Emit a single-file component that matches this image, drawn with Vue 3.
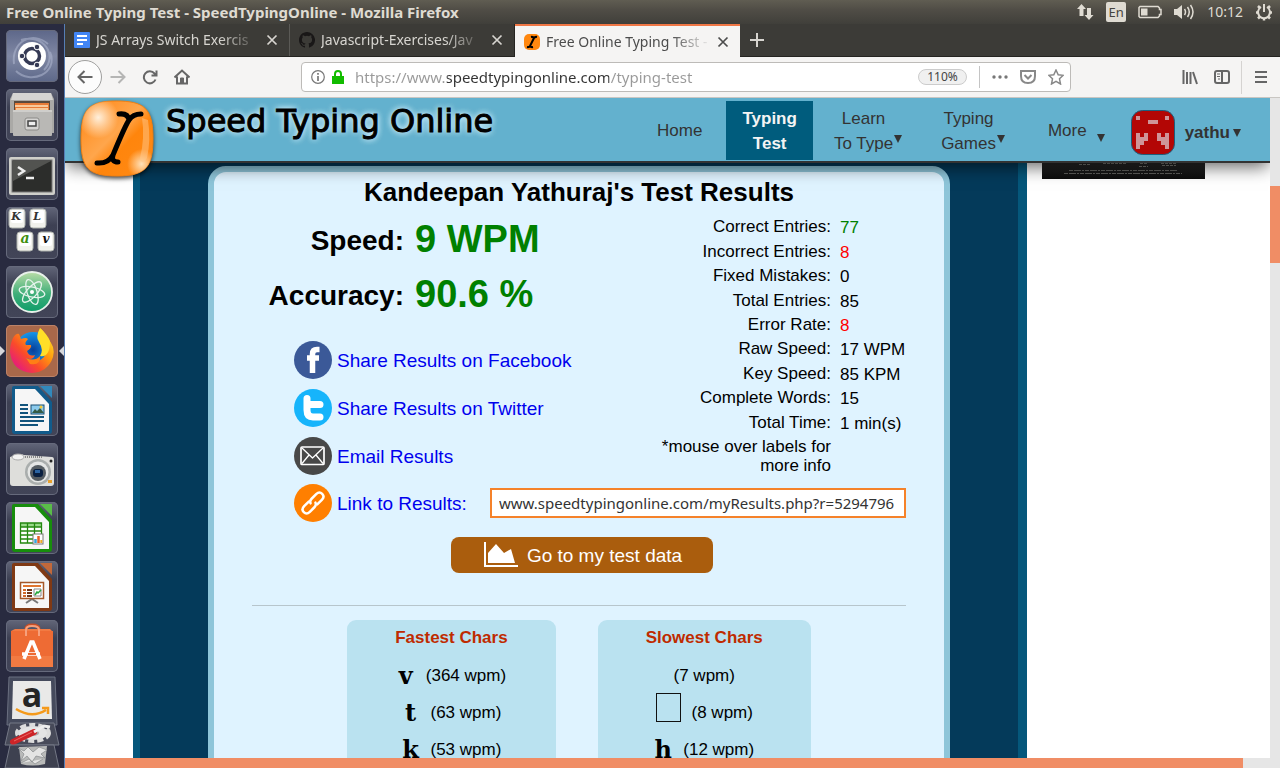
<script setup>
import { ref } from 'vue'

const tabs = [
  { id: 'docs', title: 'JS Arrays Switch Exercis', icon: 'docs' },
  { id: 'github', title: 'Javascript-Exercises/Jav', icon: 'github' },
  { id: 'typing', title: 'Free Online Typing Test -', icon: 'typing', active: true },
]

const stats = [
  { label: 'Correct Entries:', value: '77', tone: 'good' },
  { label: 'Incorrect Entries:', value: '8', tone: 'bad' },
  { label: 'Fixed Mistakes:', value: '0' },
  { label: 'Total Entries:', value: '85' },
  { label: 'Error Rate:', value: '8', tone: 'bad' },
  { label: 'Raw Speed:', value: '17 WPM' },
  { label: 'Key Speed:', value: '85 KPM' },
  { label: 'Complete Words:', value: '15' },
  { label: 'Total Time:', value: '1 min(s)' },
]

const charBoxes = [
  {
    title: 'Fastest Chars',
    rows: [
      { char: 'v', speed: '(364 wpm)' },
      { char: 't', speed: '(63 wpm)' },
      { char: 'k', speed: '(53 wpm)' },
    ],
  },
  {
    title: 'Slowest Chars',
    rows: [
      { char: '', speed: '(7 wpm)' },
      { char: '', speed: '(8 wpm)', empty: true },
      { char: 'h', speed: '(12 wpm)' },
    ],
  },
]

const address = ref('https://www.speedtypingonline.com/typing-test')
const resultLink = ref('www.speedtypingonline.com/myResults.php?r=5294796')
</script>

<template>
  <div class="desktop">
    <header class="panel">
      <span class="panel-title">Free Online Typing Test - SpeedTypingOnline - Mozilla Firefox</span>
      <div class="indicators">
        <svg width="18" height="18" viewBox="0 0 18 18" fill="#dfdbd2">
          <path d="M5.500 1L10 6H7.500V13H3.500V6H1Z" />
          <path d="M13 17L17.500 12H15V5H11V12H8.500Z" />
        </svg>
        <span class="lang">En</span>
        <svg width="24" height="14" viewBox="0 0 24 14" fill="none" stroke="#dfdbd2" stroke-width="1.500">
          <path d="M2 1.500H20L21.500 3V4.500H23V9.500H21.500V11L20 12.500H2L1 11.500V2.500Z" />
          <rect x="3" y="3.500" width="6.500" height="7" fill="#dfdbd2" stroke="none" />
        </svg>
        <svg width="21" height="18" viewBox="0 0 21 18" fill="none" stroke="#dfdbd2" stroke-width="1.500">
          <path d="M0 6H3L8 2V16L3 12H0Z" fill="#dfdbd2" stroke="none" />
          <path d="M10.500 6Q12.500 9 10.500 12M13.500 4Q17 9 13.500 14M16.500 2Q21.500 9 16.500 16" />
        </svg>
        <span class="clock">10:12</span>
        <svg width="18" height="18" viewBox="0 0 18 18" fill="none" stroke="#dfdbd2">
          <path d="M6 4A6 6 0 1 0 12 4" stroke-width="2" />
          <path d="M9 1V9" stroke-width="2" />
          <path d="M3 3L5 5M15 3L13 5M1 9.500H3M17 9.500H15M3 15.500L5 13.500M15 15.500L13 13.500M9 15V17.500" stroke-width="2.500" />
        </svg>
      </div>
    </header>

    <div class="workspace">
      <nav class="launcher" aria-label="Launcher">
        <button class="tile dash" aria-label="Dash">
          <svg viewBox="0 0 52 52">
            <path d="M8 34C5 12 26 0 42 14M44 22C53 44 24 55 10 41M15 10C38 3 52 26 38 40" fill="none" stroke="#b5bdd5" stroke-width="2" opacity=".5" />
            <circle cx="26" cy="26" r="14" fill="#fff" />
            <circle cx="26" cy="26" r="7.500" fill="none" stroke="#353a55" stroke-width="3.500" />
            <g fill="#353a55" stroke="#fff" stroke-width="1"><circle cx="16" cy="26" r="2.800" /><circle cx="31" cy="17" r="2.800" /><circle cx="31" cy="35" r="2.800" /></g>
          </svg>
        </button>
        <button class="tile" aria-label="Files">
          <svg viewBox="0 0 52 52">
            <path d="M7 4H45L48 10V44H4V10Z" fill="#aaa9a6" />
            <path d="M7 4H45L47 11H5Z" fill="#d5d4d2" />
            <rect x="8" y="12" width="36" height="10" fill="#594a3e" />
            <rect x="9" y="14" width="34" height="8" fill="#e87b37" />
            <path d="M9 17H42M10 20H42" stroke="#fbe4bd" stroke-width="1.500" />
            <rect x="7" y="21" width="39" height="26" rx="1" fill="#b9b8b5" />
            <path d="M7 22H46" stroke="#e5e4e1" />
            <rect x="19" y="29" width="14" height="12" rx="2" fill="#d5d4d2" stroke="#8b8a87" />
            <rect x="22" y="32" width="8" height="5" fill="#eee" stroke="#444" stroke-width="1.500" />
          </svg>
        </button>
        <button class="tile" aria-label="Terminal">
          <svg viewBox="0 0 52 52">
            <rect x="3" y="9" width="46" height="38" rx="2" fill="#cfcfca" />
            <rect x="6" y="12" width="40" height="32" fill="#2c2d2b" stroke="#777" />
            <path d="M7 13H45L7 33Z" fill="#525350" />
            <path d="M12 19L18 23L12 27" fill="none" stroke="#eee" stroke-width="2.500" /><path d="M20 30H28" stroke="#eee" stroke-width="2.500" />
          </svg>
        </button>
        <button class="tile" aria-label="Klavaro">
          <svg viewBox="0 0 52 52" font-family="'DejaVu Serif', serif" font-size="11" font-weight="700" font-style="italic" text-anchor="middle">
            <g fill="#f1f1ec" stroke="#aeb2ad"><rect x="3" y="2" width="16" height="19" rx="3" /><rect x="24" y="2" width="16" height="19" rx="3" /><rect x="11" y="25" width="16" height="19" rx="3" /><rect x="32" y="25" width="16" height="19" rx="3" /></g>
            <g fill="#fff"><rect x="5" y="3" width="12" height="13" rx="2" /><rect x="26" y="3" width="12" height="13" rx="2" /><rect x="13" y="26" width="12" height="13" rx="2" /><rect x="34" y="26" width="12" height="13" rx="2" /></g>
            <text x="10" y="13" fill="#333">K</text><text x="31" y="13" fill="#333">L</text><text x="19" y="36" fill="#3e8f10" font-size="14">a</text><text x="40" y="36" fill="#111" font-size="12">v</text>
          </svg>
        </button>
        <button class="tile" aria-label="Atom">
          <svg viewBox="0 0 52 52">
            <defs><linearGradient id="atom" x2="0" y2="1"><stop stop-color="#b9dda7" /><stop offset=".55" stop-color="#3fae79" /><stop offset="1" stop-color="#0e9d69" /></linearGradient></defs>
            <circle cx="26" cy="26" r="20" fill="url(#atom)" stroke="#e8f1ea" stroke-width="1.800" />
            <g fill="none" stroke="#e5f3ec" stroke-width="1.300"><ellipse cx="26" cy="26" rx="13" ry="5" transform="rotate(12 26 26)" /><ellipse cx="26" cy="26" rx="13" ry="5" transform="rotate(72 26 26)" /><ellipse cx="26" cy="26" rx="13" ry="5" transform="rotate(132 26 26)" /></g>
            <circle cx="26" cy="26" r="2" fill="#fff" />
          </svg>
        </button>
        <button class="tile running" aria-label="Firefox">
          <svg viewBox="0 0 52 52">
            <defs>
              <linearGradient id="fox" x1=".9" y1=".1" x2=".1" y2=".9"><stop stop-color="#ffe226" /><stop offset=".35" stop-color="#ff980e" /><stop offset=".65" stop-color="#fa4b2a" /><stop offset="1" stop-color="#e31587" /></linearGradient>
              <radialGradient id="globe"><stop stop-color="#073f9a" /><stop offset="1" stop-color="#1595e8" /></radialGradient>
            </defs>
            <circle cx="27" cy="25" r="18" fill="url(#globe)" />
            <path d="M7 13Q10 8 13 9L15 14Q20 12 22 14Q18 18 20 20H25Q26 23 21 26Q23 32 29 30Q27 36 20 33Q29 41 38 32Q42 25 38 18Q37 9 34 3Q38 6 40 12Q50 21 47 32Q42 47 26 48Q6 46 4 27Q4 19 7 13Z" fill="url(#fox)" />
            <path d="M34 3Q29 12 33 17Q38 25 34 31Q44 33 44 16Q41 9 34 3Z" fill="#ffdf28" />
            <path d="M20 33Q29 37 34 31Q35 41 24 39Z" fill="#ff7f15" />
          </svg>
        </button>
        <button class="tile" aria-label="LibreOffice Writer">
          <svg viewBox="0 0 52 52">
            <path d="M8 2H32L46 18V47Q46 50 43 50H9Q6 50 6 47V4Q6 2 8 2Z" fill="#115b8b" />
            <path d="M9 5H29L43 20V47H9Z" fill="#f6f6f6" /><path d="M34 2H46V14Z" fill="#3189bd" />
            <path d="M14 21H22M14 25H22M14 29H22M14 33H38M14 37H38M14 41H32" stroke="#12547c" stroke-width="2" />
            <rect x="25" y="21" width="13" height="9" fill="#8ccbed" stroke="#164c70" /><path d="M26 29L29 25L31 27L34 24L38 29Z" fill="#345b45" /><circle cx="35" cy="23" r="1.500" fill="#f8c934" />
          </svg>
        </button>
        <button class="tile" aria-label="Shotwell">
          <svg viewBox="0 0 52 52">
            <path d="M4 14L10 12Q14 10 18 12L46 14Q48 14 48 17V40Q48 43 45 43H7Q4 43 4 40Z" fill="#dededb" />
            <ellipse cx="12" cy="14" rx="6" ry="3" fill="#f3f3f2" stroke="#aaa" /><path d="M19 14H36" stroke="#888" stroke-width="2" stroke-dasharray="1 1" />
            <circle cx="32" cy="29" r="13" fill="#aaaead" /><circle cx="32" cy="29" r="10.500" fill="#e5e6e5" /><circle cx="32" cy="30" r="8" fill="#555c62" /><rect x="27" y="26" width="10" height="8" rx="3" fill="#091f40" /><rect x="29" y="27" width="5" height="3" fill="#2a63a3" />
            <circle cx="45" cy="18" r="1.500" fill="#222" /><rect x="42" y="37" width="4" height="3" fill="#e9a12b" />
          </svg>
        </button>
        <button class="tile" aria-label="LibreOffice Calc">
          <svg viewBox="0 0 52 52">
            <path d="M8 2H32L46 18V47Q46 50 43 50H9Q6 50 6 47V4Q6 2 8 2Z" fill="#178d0c" />
            <path d="M9 5H29L43 20V47H9Z" fill="#f6f6f6" /><path d="M34 2H46V14Z" fill="#59bd48" />
            <rect x="14.500" y="21" width="21" height="20" fill="#fff" /><rect x="14.500" y="21" width="21" height="4" fill="#98d989" />
            <path d="M14.500 21H35.500V41H14.500ZM14.500 25H35.500M14.500 29H35.500M14.500 33H35.500M14.500 37H35.500M21.500 21V41M28.500 21V41" fill="none" stroke="#23870f" stroke-width="1.300" />
            <rect x="27" y="32" width="10" height="10" fill="#fff" stroke="#777" /><path d="M29.500 41V37" stroke="#35a4df" stroke-width="2.500" /><path d="M32.500 41V34" stroke="#e55c24" stroke-width="2.500" /><path d="M35.300 41V38" stroke="#efac23" stroke-width="2" />
          </svg>
        </button>
        <button class="tile" aria-label="LibreOffice Impress">
          <svg viewBox="0 0 52 52">
            <path d="M8 2H32L46 18V47Q46 50 43 50H9Q6 50 6 47V4Q6 2 8 2Z" fill="#803914" />
            <path d="M9 5H29L43 20V47H9Z" fill="#f6f6f6" /><path d="M34 2H46V14Z" fill="#c2683a" />
            <path d="M20 42L26 38L32 42" fill="none" stroke="#777" stroke-width="2" /><rect x="14.500" y="21.500" width="23" height="16" fill="#fff" stroke="#a5582a" stroke-width="1.500" />
            <path d="M17 25H35" stroke="#e17631" stroke-width="2" /><path d="M17 29H20M17 32H20M17 35H20" stroke="#d16a2d" stroke-width="2" /><path d="M21 29H26M21 32H26M21 35H26" stroke="#713719" stroke-width="2" /><path d="M28 28H35V35H28Z" fill="none" stroke="#888" /><path d="M29 34L31 31L32 32L35 29" fill="none" stroke="#26a83b" stroke-width="1.500" />
          </svg>
        </button>
        <button class="tile" aria-label="Ubuntu Software">
          <svg viewBox="0 0 52 52">
            <path d="M20 13V9Q20 5 26 5Q33 5 33 9V18" fill="none" stroke="#c94f26" stroke-width="3" /><path d="M5 11L9 9H44L47 12V47H5Z" fill="#f27a42" /><path d="M5 11H47V36H5Z" fill="#ee6b34" />
            <path d="M20 16V10Q20 6 26 6Q33 6 33 10V16" fill="none" stroke="#f6a07c" stroke-width="2" />
            <path d="M18 39L25 22H27L34 39M16 34H34" fill="none" stroke="#fff" stroke-width="3.500" /><path d="M22 34H30" stroke="#ee6b34" stroke-width="2" />
          </svg>
        </button>
        <button class="tile folded" aria-label="Amazon">
          <svg viewBox="0 0 52 50">
            <path d="M3 1H49L51 49H1Z" fill="#454a5c" stroke="#6b7080" /><path d="M7 5H45L46 43H6Z" fill="#e9e9e8" />
            <text x="26" y="31" text-anchor="middle" font-family="'Open Sans', sans-serif" font-weight="700" font-size="34" fill="#252525">a</text>
            <path d="M10 33Q26 43 40 34M36 32H42V38" fill="none" stroke="#f59a1b" stroke-width="2.500" />
          </svg>
        </button>
        <button class="tile leaf" aria-label="System Settings">
          <svg viewBox="0 0 56 25">
            <path d="M6 1H50L55 23H1Z" fill="#474a59" stroke="#747886" />
            <ellipse cx="29" cy="11" rx="15" ry="7" fill="#e4e4e4" /><ellipse cx="29" cy="11" rx="16" ry="8" fill="none" stroke="#dcdcdc" stroke-width="4" stroke-dasharray="6 3" /><ellipse cx="29" cy="11" rx="6" ry="3" fill="#aaa" />
            <path d="M9 20L30 10" stroke="#cd2427" stroke-width="6" stroke-linecap="round" /><path d="M30 10L40 4L46 5" fill="none" stroke="#eee" stroke-width="3" /><path d="M10 19L28 10" stroke="#ee6662" />
          </svg>
        </button>
        <button class="tile leaf" aria-label="Trash">
          <svg viewBox="0 0 56 25">
            <path d="M6 1H50L55 24H1Z" fill="#3e4150" stroke="#747886" /><path d="M15 3L43 2L41 20Q28 23 17 20Z" fill="#b9bab9" />
            <path d="M14 4L20 7L24 3L29 8L35 3L43 6L37 10L41 14L32 12L28 18L23 12L17 17L20 10ZM17 19L25 15L31 20L39 15" fill="#e4e4e3" stroke="#888b8c" stroke-width=".7" />
          </svg>
        </button>
      </nav>

      <main class="browser">
        <div class="tabs" role="tablist">
          <div v-for="tab in tabs" :key="tab.id" class="tab" :class="{ active: tab.active }">
            <svg v-if="tab.icon === 'docs'" width="16" height="16" viewBox="0 0 16 16"><rect width="16" height="16" rx="1" fill="#4285f4" /><path d="M3 4H13M3 8H13M3 12H9" stroke="#fff" stroke-width="2" /></svg>
            <svg v-else-if="tab.icon === 'github'" width="16" height="16" viewBox="0 0 16 16"><path fill="#191717" d="M8 0C3.580 0 0 3.580 0 8c0 3.540 2.290 6.530 5.470 7.590.4.070.55-.17.55-.38v-1.500c-2 .4-2.600-.5-2.800-1-.1-.2-.5-.9-.8-1.100-.3-.1-.7-.5 0-.5.6 0 1.100.6 1.200.8.7 1.200 1.900.9 2.400.7.070-.52.280-.87.510-1.070-1.780-.2-3.640-.89-3.640-3.950 0-.87.310-1.590.82-2.150-.08-.2-.36-1.020.08-2.120 0 0 .67-.21 2.200.82a7.700 7.700 0 0 1 4 0c1.530-1.040 2.200-.82 2.200-.82.44 1.100.16 1.920.08 2.120.51.560.82 1.270.82 2.150 0 3.070-1.870 3.750-3.650 3.950.29.250.54.730.54 1.480v2.200c0 .210.150.46.55.38A8 8 0 0 0 8 0Z" /></svg>
            <svg v-else width="16" height="16" viewBox="0 0 16 16"><rect width="16" height="16" rx="5" fill="#ff870f" /><path d="M7 3Q9 2.500 10 4Q11 2.500 13 3M10 4L6 12M3 13Q5 13.500 6 12Q7 13.500 9 13" fill="none" stroke="#000" stroke-width="2" /></svg>
            <button class="tab-title" role="tab" :aria-selected="!!tab.active">{{ tab.title }}</button>
            <button class="tab-close" :aria-label="'Close ' + tab.title"><svg width="12" height="12" viewBox="0 0 12 12"><path d="M1.500 1.500L10.500 10.500M10.500 1.500L1.500 10.500" stroke="currentColor" stroke-width="1.700" /></svg></button>
          </div>
          <button class="new-tab" aria-label="New tab"><svg width="14" height="14" viewBox="0 0 14 14"><path d="M7 0V14M0 7H14" stroke="#d7d5d0" stroke-width="2" /></svg></button>
        </div>

        <div class="toolbar">
          <button class="tool back" aria-label="Back"><svg viewBox="0 0 16 16"><path d="M15.500 8H1.500M7.500 2L1.500 8L7.500 14" /></svg></button>
          <button class="tool dim" aria-label="Forward"><svg viewBox="0 0 16 16"><path d="M.5 8H14.500M8.500 2L14.500 8L8.500 14" /></svg></button>
          <button class="tool" aria-label="Reload"><svg viewBox="0 0 16 16"><path d="M13.500 10.500A6 6 0 1 1 12.500 4.500L14 6M14.500 1.500V6.500H9.500" /></svg></button>
          <button class="tool" aria-label="Home"><svg viewBox="0 0 16 16"><path d="M.5 8.500L8 1.500L15.500 8.500M3 7.500V14.500H13V7.500" /><path d="M6.500 9H9.500V14H6.500Z" fill="currentColor" stroke-width="1" /></svg></button>
          <span class="spacer"></span>
          <div class="urlbar">
            <svg class="url-icon" width="14" height="14" viewBox="0 0 14 14"><circle cx="7" cy="7" r="6.300" fill="none" stroke="#777" stroke-width="1.200" /><path d="M7 6V11M7 3V4.700" stroke="#777" stroke-width="1.700" /></svg>
            <svg class="url-icon" width="12" height="14" viewBox="0 0 12 14"><path d="M0 6H12V14H0Z" fill="#12bc00" /><path d="M3 7V4Q3 1 6 1Q9 1 9 4V7" fill="none" stroke="#12bc00" stroke-width="2" /></svg>
            <input v-model="address" class="address" aria-label="Address" type="text" />
            <button class="zoom">110%</button>
            <span class="divider"></span>
            <button class="mini" aria-label="Page actions"><svg viewBox="0 0 16 16"><g fill="#777" stroke="none"><circle cx="2" cy="8" r="1.700" /><circle cx="8" cy="8" r="1.700" /><circle cx="14" cy="8" r="1.700" /></g></svg></button>
            <button class="mini" aria-label="Pocket"><svg viewBox="0 0 16 16"><path d="M1 2H15V7Q15 14 8 14Q1 14 1 7Z" /><path d="M4.500 6L8 9.500L11.500 6" /></svg></button>
            <button class="mini" aria-label="Bookmark"><svg viewBox="0 0 16 16"><path d="M8 1L10.200 5.700L15.200 6.300L11.500 9.800L12.500 15L8 12.400L3.500 15L4.500 9.800L.8 6.300L5.800 5.700Z" stroke-width="1.500" /></svg></button>
          </div>
          <span class="spacer"></span>
          <button class="tool" aria-label="Library"><svg viewBox="0 0 16 16"><path d="M1.500 1V15M5 3V15M8.500 3V15M11 3L15 15" /></svg></button>
          <button class="tool" aria-label="Sidebar"><svg viewBox="0 0 16 16"><rect x="1" y="2" width="14" height="12" rx="2" /><path d="M8 2V14" /><path d="M3 5H6M3 7.500H6M4 10H6" stroke-width="1" /></svg></button>
          <span class="divider tall"></span>
          <button class="tool menu" aria-label="Menu"><svg viewBox="0 0 16 16"><path d="M2 3H14M2 8H14M2 13H14" /></svg></button>
        </div>

        <div class="viewport">
          <div class="page">
            <header class="site-header">
              <a href="#" class="brand">
                <svg class="brand-mark" width="80" height="84" viewBox="0 0 80 84">
                  <defs>
                    <radialGradient id="shine" cx=".24" cy=".22" r=".28"><stop stop-color="#fff0dc" /><stop offset="1" stop-color="#fff0dc" stop-opacity="0" /></radialGradient>
                    <radialGradient id="shine2" cx=".84" cy=".84" r=".2"><stop stop-color="#ffe1b9" /><stop offset="1" stop-color="#ffe1b9" stop-opacity="0" /></radialGradient>
                    <linearGradient id="glaze" x2="1" y2="1"><stop stop-color="#ff8410" /><stop offset=".45" stop-color="#ffa64c" /><stop offset=".6" stop-color="#ff850c" /><stop offset="1" stop-color="#ff8a16" /></linearGradient>
                  </defs>
                  <path d="M38 3C66 3 75 10 75 40C75 68 69 78 39 78C9 78 3 69 3 41C3 12 10 3 38 3Z" fill="url(#glaze)" stroke="#f18012" />
                  <path d="M38 3C66 3 75 10 75 40C75 68 69 78 39 78C9 78 3 69 3 41C3 12 10 3 38 3Z" fill="url(#shine)" />
                  <path d="M38 3C66 3 75 10 75 40C75 68 69 78 39 78C9 78 3 69 3 41C3 12 10 3 38 3Z" fill="url(#shine2)" />
                  <path d="M70 22Q73 42 69 60Q64 68 62 60Q67 40 64 20Z" fill="#ffc78c" opacity=".5" />
                  <path d="M41 16Q50 15 51 22Q55 16 63 16M51 22Q47 28 35 57M19 65Q30 66 35 57Q33 64 40 64" fill="none" stroke="#000" stroke-width="5" stroke-linecap="round" stroke-linejoin="round" />
                </svg>
                <span class="brand-name">Speed Typing Online</span>
              </a>
              <nav class="site-nav">
                <a href="#" class="nav-home">Home</a>
                <a href="#" class="nav-current">Typing<br />Test</a>
                <a href="#" class="nav-drop"><span>Learn<br />To Type</span><i class="caret"></i></a>
                <a href="#" class="nav-drop games"><span>Typing<br />Games</span><i class="caret"></i></a>
                <a href="#" class="nav-more"><span>More</span><i class="caret"></i></a>
                <a href="#" class="user">
                  <svg width="44" height="45" viewBox="0 0 44 45">
                    <rect x=".5" y=".5" width="43" height="44" rx="11" fill="#b30605" stroke="#1c5e7d" />
                    <g fill="#cf9498"><path d="M5 6H9V10H5ZM34 6H38V10H34ZM17 10H27V14H17Z" /><path d="M5 23H9V27H13V23H17V31H13V35H9V39H5ZM26 23H30V27H34V23H38V39H34V35H30V31H26Z" /></g>
                  </svg>
                  <span>yathu</span><i class="caret"></i>
                </a>
              </nav>
            </header>

            <div class="columns">
              <div class="board">
                <section class="card">
                  <h1>Kandeepan Yathuraj's Test Results</h1>
                  <div class="summary">
                    <div class="summary-main">
                      <dl class="scores">
                        <dt>Speed:</dt><dd>9 WPM</dd>
                        <dt>Accuracy:</dt><dd>90.6 %</dd>
                      </dl>
                      <div class="shares">
                        <a href="#" class="share">
                          <svg width="38" height="38" viewBox="0 0 38 38"><circle cx="19" cy="19" r="19" fill="#3b5998" /><path d="M25.500 8.500H23Q18.500 8.500 18.500 13V32M13 17H25" fill="none" stroke="#fff" stroke-width="5.500" /></svg>
                          <span>Share Results on Facebook</span>
                        </a>
                        <a href="#" class="share">
                          <svg width="38" height="38" viewBox="0 0 38 38"><circle cx="19" cy="19" r="19" fill="#16b4fb" /><path d="M13 9.500V21Q13 28 19 28H26M13 15.500H26" fill="none" stroke="#fff" stroke-width="7" stroke-linecap="round" /></svg>
                          <span>Share Results on Twitter</span>
                        </a>
                        <a href="#" class="share">
                          <svg width="38" height="38" viewBox="0 0 38 38"><circle cx="19" cy="19" r="19" fill="#484848" /><g fill="none" stroke="#fff" stroke-linejoin="round"><rect x="7" y="10" width="23" height="17.500" rx="1" stroke-width="1.700" /><path d="M8 11L18.500 21L29 11M8 26.500L15 18M29 26.500L22 18" stroke-width="1.300" /></g></svg>
                          <span>Email Results</span>
                        </a>
                      </div>
                    </div>
                    <div class="details">
                      <table>
                        <tbody>
                          <tr v-for="row in stats" :key="row.label">
                            <th scope="row">{{ row.label }}</th>
                            <td :class="row.tone">{{ row.value }}</td>
                          </tr>
                        </tbody>
                      </table>
                      <p class="note">*mouse over labels for more info</p>
                    </div>
                  </div>

                  <div class="link-row">
                    <label for="result-link" class="share">
                      <svg width="38" height="38" viewBox="0 0 38 38"><circle cx="19" cy="19" r="19" fill="#ff7f00" /><g fill="none" stroke="#fff" stroke-width="2.500" transform="rotate(-45 19 19)"><path d="M17 15H10.500Q6 15 6 19Q6 23 10.500 23H17Q20 23 21 20.500" stroke-linecap="round" /><path d="M21 23H27.500Q32 23 32 19Q32 15 27.500 15H21Q18 15 17 17.500" stroke-linecap="round" /></g></svg>
                      <span>Link to Results:</span>
                    </label>
                    <input id="result-link" v-model="resultLink" class="result-link" type="text" />
                  </div>

                  <div class="action">
                    <button class="data-button">
                      <svg width="34" height="26" viewBox="0 0 34 26" fill="#fff"><path d="M0 0H2V23H34V25H0Z" /><path d="M4 21V11L12 2L20 11L27 7L31 21Z" /></svg>
                      <span>Go to my test data</span>
                    </button>
                  </div>

                  <hr />
                  <div class="char-boxes">
                    <section v-for="box in charBoxes" :key="box.title" class="char-box">
                      <h2>{{ box.title }}</h2>
                      <p v-for="row in box.rows" :key="row.speed">
                        <b v-if="row.char">{{ row.char }}</b>
                        <span v-if="row.empty" class="blank"></span>
                        <span>{{ row.speed }}</span>
                      </p>
                    </section>
                  </div>
                </section>
              </div>
              <aside class="ad" aria-label="Advertisement">
                <svg viewBox="0 0 163 16" width="163" height="16" stroke="#9b9b93" fill="none">
                  <path d="M37 1.500H48M61 .5H84M98 .5H105M97 3.500H106M119 .5H135M120 2.500H134" stroke-dasharray="3 1" opacity=".7" />
                  <path d="M27 7.500H136M22 10.500H140" stroke-dasharray="4 1 7 1 2 1" opacity=".55" />
                </svg>
              </aside>
            </div>
          </div>
          <div class="vbar"><span></span></div>
        </div>
        <div class="hbar"><span></span></div>
      </main>
    </div>
  </div>
</template>

<style>
body { margin: 0; overflow: hidden; }
</style>

<style scoped>
* { box-sizing: border-box; }
button { border: 0; padding: 0; margin: 0; background: none; font: inherit; color: inherit; }
a { color: inherit; text-decoration: none; }
svg { display: block; flex: none; }

.desktop {
  display: flex;
  flex-direction: column;
  height: 100vh;
  font-family: "Noto Sans", "Open Sans", sans-serif;
}
.panel {
  display: flex;
  align-items: center;
  justify-content: space-between;
  height: 24px;
  padding: 0 7px 0 6px;
  background: linear-gradient(#605d52, #504d46 40%, #403f3a);
  color: #dfdbd2;
}
.panel-title { font-size: 15px; font-weight: 700; line-height: 24px; white-space: nowrap; }
.indicators { display: flex; align-items: center; gap: 12px; }
.lang {
  width: 20px;
  height: 20px;
  border-radius: 2px;
  background: #dfdbd2;
  color: #45433e;
  font-size: 13px;
  line-height: 20px;
  text-align: center;
}
.clock { font-size: 14px; line-height: 24px; }

.workspace { display: flex; flex: 1; min-height: 0; }
.launcher {
  display: flex;
  flex-direction: column;
  align-items: center;
  gap: 7px;
  flex: none;
  width: 65px;
  padding: 6px 1px 0 0;
  border-right: 1px solid #567eb5;
  background: #292b40;
  overflow: hidden;
}
.tile {
  position: relative;
  flex: none;
  width: 52px;
  height: 52px;
  border-radius: 5px;
  background: linear-gradient(#626679, #3d4053 35%, #424558);
  box-shadow: inset 0 0 0 1px #666a7c;
}
.tile svg { width: 100%; overflow: visible; }
.dash { background: linear-gradient(#5d6789, #8088a4 50%, #5d6889); }
.running { background: #a9684a; box-shadow: inset 0 0 0 1px #bb8268; }
.running::before, .running::after {
  content: "";
  position: absolute;
  top: 21px;
  border: 5px solid transparent;
}
.running::before { left: -6px; border-left-color: #d6d7db; border-right: 0; }
.running::after { right: -6px; border-right-color: #d6d7db; border-left: 0; }
.folded, .leaf { background: none; box-shadow: none; }
.folded { height: 46px; margin-top: -3px; }
.leaf { width: 56px; height: 22px; margin-top: -7px; }

.browser { display: flex; flex-direction: column; flex: 1; min-width: 0; }
.tabs { display: flex; height: 33px; background: #3c3b37; border-bottom: 1px solid #252421; color: #d7d5d0; }
.tab {
  position: relative;
  display: flex;
  align-items: center;
  width: 225px;
  padding: 0 11px 0 9px;
  border-right: 1px solid #5b5a56;
}
.tab:nth-child(2) { border-right-color: #252421; }
.tab.active { margin-bottom: -1px; border-right: 0; border-top: 2px solid #f07746; background: #f5f4f3; color: #4c4c4c; }
.tab-title {
  flex: 1;
  min-width: 0;
  margin-left: 6px;
  font-size: 14px;
  line-height: 24px;
  text-align: left;
  white-space: nowrap;
  mask-image: linear-gradient(to right, #000 calc(100% - 40px), transparent);
}
.tab-close { margin-left: 6px; padding: 1px 0; }
.new-tab { padding: 0 10px; }

.toolbar {
  display: flex;
  align-items: center;
  height: 41px;
  padding: 0 3px;
  border-bottom: 1px solid #c9c6c2;
  background: #f5f4f3;
}
.tool { display: grid; place-items: center; flex: none; width: 32px; height: 34px; color: #666; }
.tool svg, .mini svg { width: 16px; height: 16px; fill: none; stroke: currentColor; stroke-width: 2; }
.tool.back { width: 34px; border: 1px solid #9f9f9e; border-radius: 50%; background: #fcfcfc; }
.tool.dim { color: #b5b5b4; }
.spacer { flex: 0 1 103px; }
.urlbar {
  display: flex;
  align-items: center;
  flex: 1;
  min-width: 300px;
  height: 30px;
  padding: 0 0 0 9px;
  border: 1px solid #bdbbb8;
  border-radius: 4px;
  background: #fff;
}
.url-icon { margin-right: 7px; }
.address {
  flex: 1;
  min-width: 0;
  margin-left: 4px;
  padding: 0;
  border: 0;
  outline: 0;
  background: linear-gradient(to right, #999 92px, #333 92px, #333 254px, #999 254px);
  background-clip: text;
  -webkit-background-clip: text;
  color: transparent;
  font-family: inherit;
  font-size: 15px;
  line-height: 24px;
}
.zoom {
  width: 49px;
  height: 16px;
  border: 1px solid #ccc;
  border-radius: 8px;
  background: #f0f0f0;
  color: #444;
  font-size: 12px;
  line-height: 14px;
}
.divider { width: 1px; height: 22px; margin: 0 6px 0 12px; background: #c4c4c4; }
.divider.tall { height: 33px; margin: 0 3px; background: #d5d3d1; }
.mini { display: grid; place-items: center; width: 28px; height: 28px; color: #888; }

.viewport { display: flex; flex: 1; min-height: 0; background: #fff; }
.page {
  display: flex;
  flex-direction: column;
  flex: 1;
  min-width: 0;
  overflow: hidden;
  font-family: "Liberation Sans", Arial, sans-serif;
  font-size: 17px;
  color: #000;
}
.site-header {
  position: relative;
  z-index: 1;
  display: flex;
  justify-content: space-between;
  flex: none;
  height: 65px;
  padding: 2px 28px 0 101px;
  border-bottom: 2px solid #333;
  background: #63b1ce;
  box-shadow: 0 6px 16px -2px rgba(0, 0, 0, 0.6);
  color: #333;
}
.brand-mark { position: absolute; top: 0; left: 13px; filter: drop-shadow(0 2px 2px rgba(0, 0, 0, 0.7)); }
.brand-name {
  display: block;
  font-family: "DejaVu Sans", sans-serif;
  font-size: 32px;
  line-height: 42px;
  color: #000;
  -webkit-text-stroke: 1px #000;
  text-shadow: 0 0 6px #d8f2ff, 0 0 6px #d8f2ff;
  white-space: nowrap;
}
.site-nav { display: flex; align-items: center; line-height: 25px; text-align: center; }
.nav-current {
  height: 59px;
  margin: 0 21px 0 24px;
  padding: 5px 16px;
  background: #005c7d;
  color: #f4f4f4;
  font-weight: 700;
}
.nav-drop { display: flex; align-items: center; }
.games { margin-left: 38px; }
.nav-more { display: flex; align-items: center; gap: 9px; margin-left: 42px; }
.nav-more .caret { margin-top: 14px; }
.nav-drop .caret { margin-top: 17px; }
.caret { flex: none; border: 4px solid transparent; border-top: 8px solid #333; border-bottom: 0; margin-right: 1px; margin-left: 1px; }
.user { display: flex; align-items: center; margin-left: 25px; padding-top: 4px; font-weight: 700; }
.user span { margin: 0 2px 0 10px; }

.columns { display: flex; flex: 1; padding-left: 68px; }
.board {
  flex: 0 1 894px;
  padding: 3px 68px 0;
  border-left: 7px solid #05577b;
  border-right: 9px solid #05577b;
  background: #043a5a;
}
.card {
  display: flex;
  flex-direction: column;
  padding: 0 38px 20px;
  border: 6px solid #8ec5d9;
  border-radius: 18px;
  background: #dff3ff;
}
h1 { margin: 0; font-size: 26px; line-height: 41px; text-align: center; }
.summary { display: flex; justify-content: space-between; }
.scores {
  display: grid;
  grid-template-columns: 152px auto;
  column-gap: 11px;
  margin: 0;
  font-weight: 700;
  line-height: 55px;
}
.scores dt { font-size: 28px; text-align: right; }
.scores dd { margin: 0; font-size: 38px; line-height: 52px; color: #008000; }
.shares { display: flex; flex-direction: column; gap: 10px; margin: 18px 0 0 42px; }
.share { display: flex; align-items: center; gap: 5px; color: #0000ee; font-size: 19px; }
.share span, .data-button span { padding-top: 2px; }
.details { padding-top: 2px; }
table { height: 220px; margin-left: auto; border-collapse: collapse; line-height: 20px; }
th { padding: 0; font-weight: 400; text-align: right; }
td { width: 75px; padding: 2px 0 0 9px; white-space: nowrap; }
.good { color: #008000; }
.bad { color: #f00; }
.note { width: 180px; margin: 2px 75px 0 auto; line-height: 19px; text-align: right; }
.link-row { display: flex; align-items: center; justify-content: space-between; margin: 9px 0 0 42px; }
.result-link {
  width: 416px;
  height: 30px;
  padding: 0 7px;
  border: 2px solid #f5822a;
  background: #fff;
  color: #333;
  font-family: "Noto Sans", sans-serif;
  font-size: 15px;
}
.action { display: flex; justify-content: center; margin-top: 15px; padding-left: 6px; }
.data-button {
  display: flex;
  align-items: center;
  gap: 9px;
  height: 36px;
  padding: 0 31px 0 33px;
  border-radius: 8px;
  background: #aa5d0d;
  color: #fff;
  font-size: 19px;
}
hr { width: 100%; height: 1px; margin: 32px 0 14px; border: 0; background: #b7c5cc; }
.char-boxes { display: flex; justify-content: center; gap: 42px; }
.char-box { padding: 0 48px 20px; border-radius: 9px; background: #bae2f0; }
h2 { margin: 0 0 1px; color: #bf2b00; font-size: 17px; line-height: 36px; }
.char-box p { display: flex; align-items: center; justify-content: center; gap: 11px; margin: 0; line-height: 37px; white-space: nowrap; }
.char-box b { min-width: 18px; font-family: "DejaVu Serif", serif; font-size: 24px; text-align: center; }
.blank { width: 25px; height: 29px; margin-top: -10px; border: 1px solid #111; }

.ad { width: 163px; height: 16px; margin-left: 15px; background: linear-gradient(#272727, #0c0c0c); overflow: hidden; }
.vbar { flex: none; width: 10px; padding-top: 88px; background: #e6e6e6; }
.vbar span { display: block; height: 77px; background: #f08d65; }
.hbar { flex: none; height: 10px; padding-right: 37px; background: #e6e6e6; }
.hbar span { display: block; height: 10px; background: #f08d65; }
</style>
